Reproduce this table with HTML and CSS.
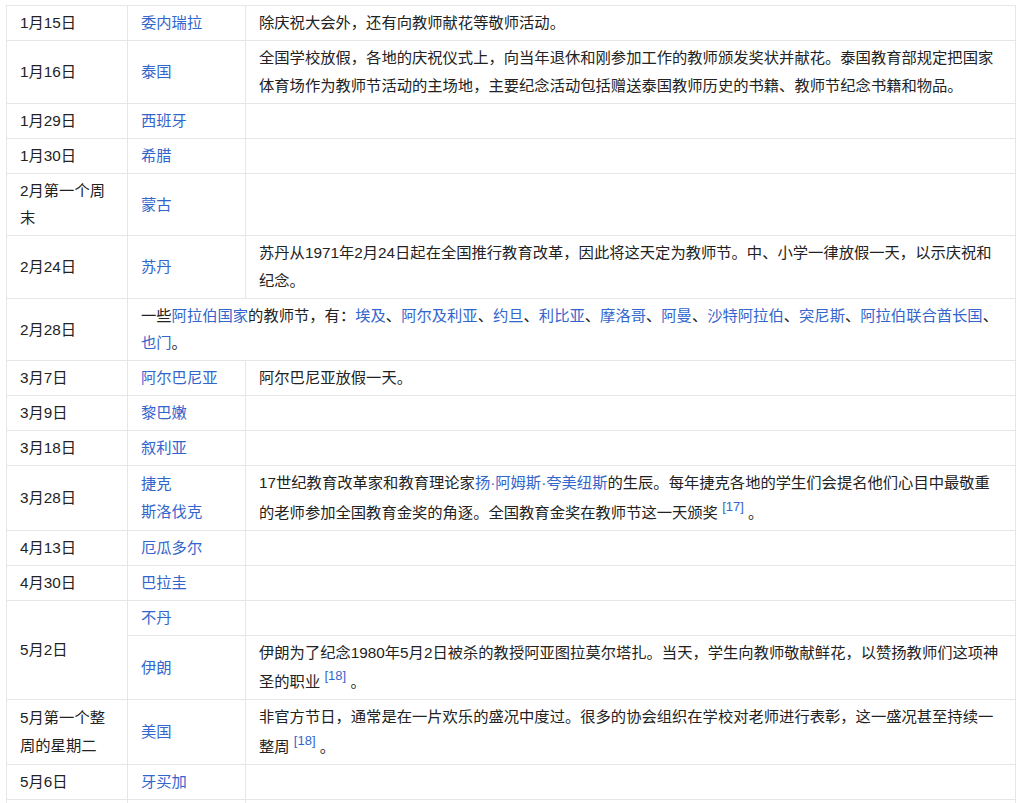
FILE: index.html
```html
<!DOCTYPE html>
<html lang="zh">
<head>
<meta charset="utf-8">
<title>教师节</title>
<link rel="stylesheet" href="styles.css">
</head>
<body>
<table class="days">
  <colgroup>
    <col class="c-date">
    <col class="c-country">
    <col class="c-desc">
  </colgroup>
  <tbody>
    <tr><td>1月15日</td><td><a href="#">委内瑞拉</a></td><td class="desc">除庆祝大会外，还有向教师献花等敬师活动。</td></tr>
    <tr><td>1月16日</td><td><a href="#">泰国</a></td><td class="desc">全国学校放假，各地的庆祝仪式上，向当年退休和刚参加工作的教师颁发奖状并献花。泰国教育部规定把国家体育场作为教师节活动的主场地，主要纪念活动包括赠送泰国教师历史的书籍、教师节纪念书籍和物品。</td></tr>
    <tr><td>1月29日</td><td><a href="#">西班牙</a></td><td class="desc"></td></tr>
    <tr><td>1月30日</td><td><a href="#">希腊</a></td><td class="desc"></td></tr>
    <tr><td>2月第一个周末</td><td><a href="#">蒙古</a></td><td class="desc"></td></tr>
    <tr><td>2月24日</td><td><a href="#">苏丹</a></td><td class="desc">苏丹从1971年2月24日起在全国推行教育改革，因此将这天定为教师节。中、小学一律放假一天，以示庆祝和纪念。</td></tr>
    <tr><td>2月28日</td><td colspan="2" class="wide">一些<a href="#">阿拉伯国家</a>的教师节，有：<a href="#">埃及</a>、<a href="#">阿尔及利亚</a>、<a href="#">约旦</a>、<a href="#">利比亚</a>、<a href="#">摩洛哥</a>、<a href="#">阿曼</a>、<a href="#">沙特阿拉伯</a>、<a href="#">突尼斯</a>、<a href="#">阿拉伯联合酋长国</a>、<a href="#">也门</a>。</td></tr>
    <tr><td>3月7日</td><td><a href="#">阿尔巴尼亚</a></td><td class="desc">阿尔巴尼亚放假一天。</td></tr>
    <tr><td>3月9日</td><td><a href="#">黎巴嫩</a></td><td class="desc"></td></tr>
    <tr><td>3月18日</td><td><a href="#">叙利亚</a></td><td class="desc"></td></tr>
    <tr><td>3月28日</td><td><a href="#">捷克</a><br><a href="#">斯洛伐克</a></td><td class="desc">17世纪教育改革家和教育理论家<a href="#">扬·阿姆斯·夸美纽斯</a>的生辰。每年捷克各地的学生们会提名他们心目中最敬重的老师参加全国教育金奖的角逐。全国教育金奖在教师节这一天颁奖 <sup><a href="#">[17]</a></sup> 。</td></tr>
    <tr><td>4月13日</td><td><a href="#">厄瓜多尔</a></td><td class="desc"></td></tr>
    <tr><td>4月30日</td><td><a href="#">巴拉圭</a></td><td class="desc"></td></tr>
    <tr><td rowspan="2">5月2日</td><td><a href="#">不丹</a></td><td class="desc"></td></tr>
    <tr><td><a href="#">伊朗</a></td><td class="desc">伊朗为了纪念1980年5月2日被杀的教授阿亚图拉莫尔塔扎。当天，学生向教师敬献鲜花，以赞扬教师们这项神圣的职业 <sup><a href="#">[18]</a></sup> 。</td></tr>
    <tr><td>5月第一个整周的星期二</td><td><a href="#">美国</a></td><td class="desc">非官方节日，通常是在一片欢乐的盛况中度过。很多的协会组织在学校对老师进行表彰，这一盛况甚至持续一整周 <sup><a href="#">[18]</a></sup> 。</td></tr>
    <tr><td>5月6日</td><td><a href="#">牙买加</a></td><td class="desc"></td></tr>
    <tr><td>5月7日</td><td><a href="#">斯洛伐克</a></td><td class="desc"></td></tr>
  </tbody>
</table>
</body>
</html>
```
FILE: styles.css
```css
html, body {
  margin: 0;
  padding: 0;
  background: #ffffff;
}

body {
  font-family: "Liberation Sans", "Noto Sans CJK SC", sans-serif;
  font-size: 15.3px;
  color: #222222;
}

.days {
  margin: 5px 0 0 6px;
  width: 1010px;
  table-layout: fixed;
  border-collapse: collapse;
}

.c-date { width: 121px; }
.c-country { width: 118px; }

.days td {
  border: 1px solid #e6e6e6;
  padding: 3.25px 13px;
  line-height: 27.5px;
  vertical-align: middle;
  text-align: left;
}

.days td.desc {
  padding-right: 16px;
}

.days td.wide {
  padding-right: 14px;
}

.days a {
  color: #3366cc;
  text-decoration: none;
}

.days sup {
  font-size: 13px;
  line-height: 20px;
  vertical-align: 7px;
}
```
